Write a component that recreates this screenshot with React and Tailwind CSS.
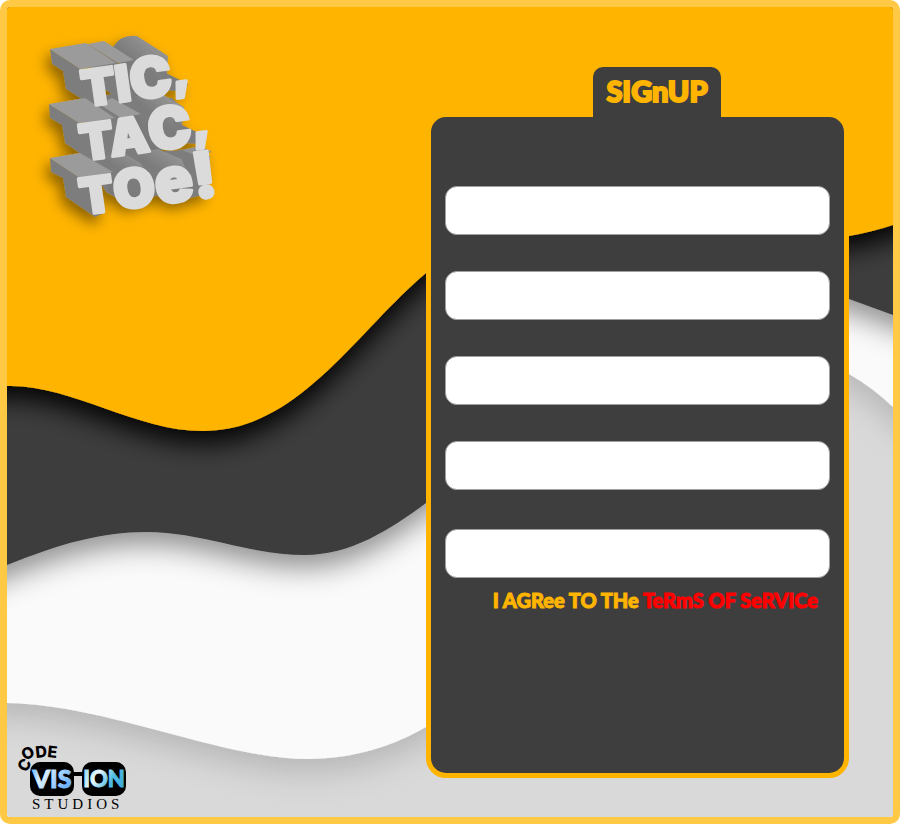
const fields = ["Username", "Email", "Confirm email", "Password", "Confirm password"];

function Waves() {
  return (
    <svg
      className="absolute inset-0 -z-10 h-full w-full"
      viewBox="7 7 886 810"
      preserveAspectRatio="none"
      aria-hidden="true"
    >
      <defs>
        <filter id="dark-shadow" filterUnits="userSpaceOnUse" x="-60" y="-60" width="1020" height="940">
          <feDropShadow dx="0" dy="13" stdDeviation="13" floodColor="#000" floodOpacity="0.95" />
        </filter>
        <filter id="mid-shadow" filterUnits="userSpaceOnUse" x="-60" y="-60" width="1020" height="940">
          <feDropShadow dx="0" dy="13" stdDeviation="14" floodColor="#000" floodOpacity="0.42" />
        </filter>
        <filter id="soft-shadow" filterUnits="userSpaceOnUse" x="-60" y="-60" width="1020" height="940">
          <feDropShadow dx="0" dy="13" stdDeviation="16" floodColor="#000" floodOpacity="0.16" />
        </filter>
      </defs>
      <rect x="0" y="0" width="900" height="824" fill="#d9d9d9" />
      <path
        filter="url(#soft-shadow)"
        fill="#fafafa"
        d="M-50 -50 L-50 703 L7 703 C110 705 220 759 308 759 C355 759 395 745 426 727 C560 650 650 250 849 374 Q872 387 893 407 L950 460 L950 -50 Z"
      />
      <path
        filter="url(#mid-shadow)"
        fill="#3e3e3e"
        d="M-50 -50 L-50 588 L7 565 C60 544 100 532 147 532 C200 532 250 555 305 555 C350 555 390 530 426 503 C560 400 650 230 849 299 L893 315 L950 336 L950 -50 Z"
      />
      <path
        filter="url(#dark-shadow)"
        fill="#ffb400"
        d="M-50 -50 L-50 388 L7 386 C70 384 135 431 203 431 C298 431 355 333 426 273 C540 160 600 180 700 220 C760 244 810 244 849 236 Q872 232 893 225 L950 205 L950 -50 Z"
      />
    </svg>
  );
}

function GameLogo() {
  return (
    <svg className="block h-[210px] w-[200px] overflow-visible" viewBox="30 20 200 210" role="img" aria-label="Tic, Tac, Toe!">
      <defs>
        <filter id="logo-shadow" x="-30%" y="-30%" width="160%" height="160%">
          <feDropShadow dx="-4" dy="7" stdDeviation="7" floodColor="#000" floodOpacity="0.45" />
        </filter>
        <linearGradient id="tube" x1="0" y1="1" x2="0.7" y2="0">
          <stop offset="0" stopColor="#777" />
          <stop offset="0.6" stopColor="#7c7c7c" />
          <stop offset="1" stopColor="#999" />
        </linearGradient>
      </defs>
      <g filter="url(#logo-shadow)">
        <path fill="url(#tube)" d="M113 47 Q121 34 137 36 L168 56 L166 92 L134 100 Z" />
        <path fill="#7d7d7d" d="M158 68 L164 72 L188 84 L184 92 L166 90 Z" />
        <path fill="#7d7d7d" d="M88 44 L118 63 L136 98 L122 102 L106 90 L96 104 Z" />
        <path fill="#9b9b9b" d="M88 44 L104 41 L134 60 L118 63 Z" />
        <path fill="#7d7d7d" d="M50 49 L80 69 L100 82 L104 104 L96 108 L66 89 L63 71 L52 64 Z" />
        <path fill="#9b9b9b" d="M50 49 L86 43 L116 63 L80 69 Z" />

        <path fill="#7d7d7d" d="M84 100 L112 94 L140 96 L172 98 L182 108 L182 145 L130 158 L100 160 L88 140 Z" />
        <path fill="url(#tube)" d="M136 96 L160 93 L184 107 L180 145 L150 150 L134 120 Z" />
        <path fill="#7d7d7d" d="M172 120 L180 124 L205 136 L200 144 L180 143 Z" />
        <path fill="#9b9b9b" d="M99 104 L112 98 L141 114 L121 118 Z" />
        <path fill="#7d7d7d" d="M49 104 L79 123 L100 130 L104 160 L94 163 L65 143 L62 125 L50 118 Z" />
        <path fill="#9b9b9b" d="M49 104 L85 98 L115 118 L79 123 Z" />

        <path fill="#7d7d7d" d="M84 155 L140 152 L196 150 L210 156 L208 194 L190 198 L176 203 L152 194 L130 206 L106 192 Z" />
        <path fill="url(#tube)" d="M102 156 L122 152 L150 169 L156 196 L132 205 L108 192 Z" />
        <path fill="url(#tube)" d="M136 153 L158 149 L188 162 L192 196 L176 202 L154 190 Z" />
        <path fill="#7d7d7d" d="M178 150 L190 149 L200 156 L204 192 L196 194 Z" />
        <path fill="#929292" d="M182 150 L200 146 L212 152 L197 156 Z" />
        <path fill="#7d7d7d" d="M50 158 L80 178 L100 185 L104 213 L95 217 L66 197 L63 178 L51 172 Z" />
        <path fill="#9b9b9b" d="M50 158 L80 153 L113 172 L80 178 Z" />
      </g>
      <g
        fill="#dbdbdb"
        stroke="#dbdbdb"
        strokeWidth="3"
        strokeLinejoin="round"
        fontFamily="Inter, sans-serif"
        fontWeight="900"
        fontSize="50"
      >
        <text transform="translate(84 107) rotate(-8)">
          TI<tspan fontSize="56">C</tspan><tspan dy="-6">,</tspan>
        </text>
        <text transform="translate(82 161) rotate(-8)">
          TA<tspan fontSize="58">C</tspan><tspan dy="-6">,</tspan>
        </text>
        <text transform="translate(82 215) rotate(-8)">
          T<tspan fontSize="54">O</tspan><tspan fontSize="63">e!</tspan>
        </text>
      </g>
    </svg>
  );
}

function StudioLogo() {
  return (
    <svg className="block h-[70px] w-[114px] overflow-visible" viewBox="14 742 114 70" role="img" aria-label="Code Vision Studios">
      <defs>
        <linearGradient id="lens-left" gradientUnits="userSpaceOnUse" x1="32" y1="765" x2="72" y2="795">
          <stop offset="0" stopColor="#5cb0ff" />
          <stop offset="0.3" stopColor="#dff1ff" />
          <stop offset="0.6" stopColor="#9bccff" />
          <stop offset="1" stopColor="#4b9cf5" />
        </linearGradient>
        <linearGradient id="lens-right" gradientUnits="userSpaceOnUse" x1="84" y1="765" x2="124" y2="790">
          <stop offset="0" stopColor="#8ad3f1" />
          <stop offset="0.35" stopColor="#e9f9ff" />
          <stop offset="0.65" stopColor="#52bce5" />
          <stop offset="1" stopColor="#3aa8d6" />
        </linearGradient>
      </defs>
      <g fontFamily="Inter, sans-serif" fontWeight="800" fontSize="16">
        <text transform="translate(26 773) rotate(-58)">C</text>
        <text transform="translate(25 761) rotate(-28)">O</text>
        <text transform="translate(36 758) rotate(-6)">D</text>
        <text transform="translate(47 757) rotate(6)">E</text>
      </g>
      <rect x="30" y="762" width="44" height="34" rx="10" />
      <rect x="82" y="762" width="44" height="34" rx="10" />
      <rect x="72" y="772" width="12" height="4" />
      <g fontFamily="Lato, sans-serif" fontWeight="900" strokeWidth="1">
        <text x="52" y="788" textAnchor="middle" fontSize="25" fill="url(#lens-left)" stroke="url(#lens-left)">
          VIS
        </text>
        <text x="104" y="787" textAnchor="middle" fontSize="22" fill="url(#lens-right)" stroke="url(#lens-right)">
          ION
        </text>
      </g>
      <text x="32" y="809" className="tracking-[4px]" fontFamily="'Liberation Serif', serif" fontSize="15">
        STUDIOS
      </text>
    </svg>
  );
}

export default function App() {
  return (
    <div className="min-h-screen bg-white font-['Lato',sans-serif]">
      <main className="relative isolate flex min-h-screen justify-between overflow-hidden rounded-[10px] border-[7px] border-[#ffc845]">
        <Waves />
        <div className="flex flex-col justify-between pt-[13px] pb-[5px] pl-[7px]">
          <div className="pl-4">
            <GameLogo />
          </div>
          <StudioLogo />
        </div>

        <section className="mr-[44px] flex w-[48%] max-w-[423px] min-w-[300px] flex-col pt-[60px] pb-[39px]">
          <h1 className="z-10 mr-[128px] -mb-[10px] flex h-[55px] w-32 items-start justify-center self-end rounded-t-[10px] bg-[#3e3e3e] pt-2 text-[29px] leading-8 font-black text-[#ffb400] [-webkit-text-stroke:2px_#ffb400]">
            SIGnUP
          </h1>
          <form className="flex-1 rounded-[20px] border-[5px] border-[#ffb400] bg-[#3e3e3e] px-[14px] pt-[69px]">
            <div className="flex flex-col gap-9">
              {fields.map((name, i) => (
                <input
                  key={name}
                  type={i > 2 ? "password" : i > 0 ? "email" : "text"}
                  aria-label={name}
                  className="h-[49px] w-full rounded-xl border border-[#a0a0a0] bg-white px-3 text-lg text-[#3e3e3e] last:mt-[3px]"
                />
              ))}
            </div>
            <p className="mt-[10px] mr-3 text-right text-[20px] leading-6 font-black whitespace-nowrap text-[#ffb400] [-webkit-text-stroke:1px_#ffb400]">
              I AGRee TO THe{" "}
              <a href="#terms" className="text-[#ff0000] [-webkit-text-stroke:1px_#ff0000]">
                TeRmS OF SeRVICe
              </a>
            </p>
          </form>
        </section>
      </main>
    </div>
  );
}
